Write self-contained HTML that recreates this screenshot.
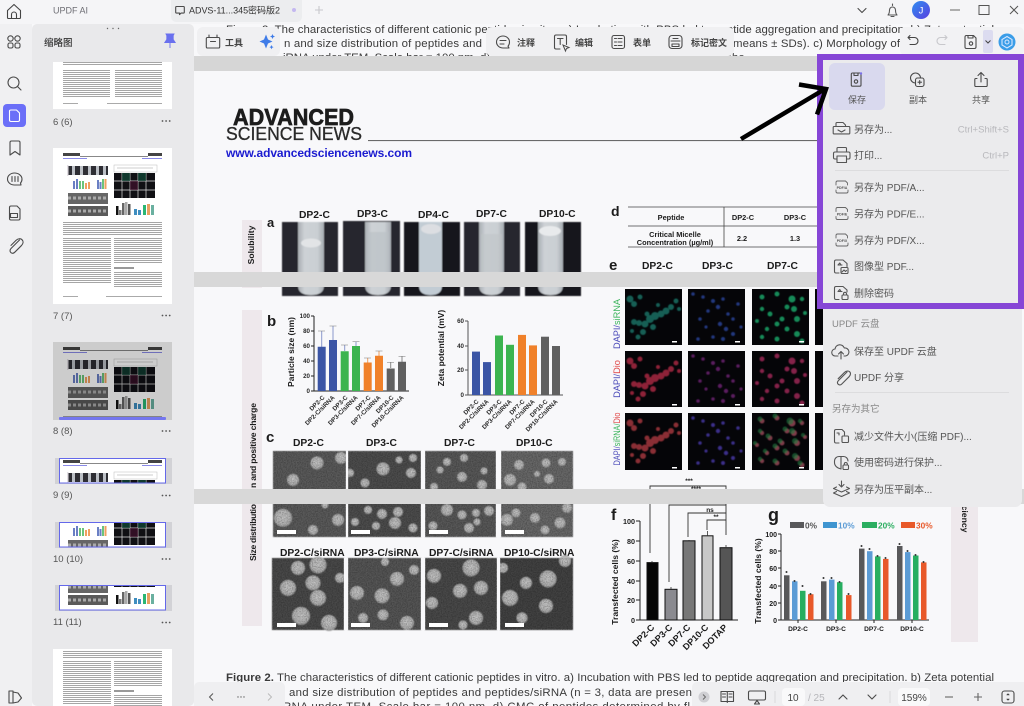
<!DOCTYPE html>
<html lang="zh">
<head>
<meta charset="utf-8">
<title>UPDF</title>
<style>
html,body{margin:0;padding:0;width:1024px;height:706px;overflow:hidden;background:#f8f8fa}
svg{display:block}
text{font-family:"Liberation Sans","Noto Sans CJK SC",sans-serif}
.cap{font-size:11.4px;fill:#3a3a3a}
.b{font-weight:bold;fill:#1c1c1c}
.l{font-size:10.3px}
.s{font-size:6.2px;font-weight:bold;fill:#2a2a2a}
.m{font-size:10px;fill:#555}
.h{font-size:9.5px;fill:#888}
.sc{font-size:9.5px;fill:#b8b8bc}
.tb{font-size:9px;fill:#444;font-weight:500}
.th{font-size:9.5px;fill:#555}
.i{fill:none;stroke:#4a4a4a;stroke-width:1.1;stroke-linecap:round;stroke-linejoin:round}
.ax{stroke:#222;stroke-width:1;fill:none}
.br{stroke:#333;stroke-width:.9;fill:none}
.pd{font-size:3.6px;font-weight:bold;fill:#555;text-anchor:middle}
</style>
</head>
<body>
<svg xmlns="http://www.w3.org/2000/svg" width="1024" height="706" viewBox="0 0 1024 706">
<defs>
<pattern id="tl" width="4" height="2" patternUnits="userSpaceOnUse"><rect width="4" height="1" fill="#a6a6a6"/></pattern>
<linearGradient id="tube" x1="0" x2="1" y1="0" y2="0"><stop offset="0" stop-color="#a8adb2"/><stop offset=".25" stop-color="#cdd1d5"/><stop offset=".75" stop-color="#cacfd3"/><stop offset="1" stop-color="#a6abb1"/></linearGradient>
<radialGradient id="ball" cx=".5" cy=".45" r=".55"><stop offset="0" stop-color="#c6c6c6"/><stop offset=".8" stop-color="#b0b0b0"/><stop offset="1" stop-color="#8c8c8c"/></radialGradient>
<filter id="sft" x="-10%" y="-10%" width="120%" height="120%"><feGaussianBlur stdDeviation=".5"/></filter>
<filter id="glow" x="-10%" y="-10%" width="120%" height="120%"><feGaussianBlur stdDeviation=".6"/></filter>
<filter id="noise" x="0" y="0" width="100%" height="100%"><feTurbulence type="fractalNoise" baseFrequency=".8" numOctaves="2" seed="4"/><feColorMatrix values="0 0 0 0 0  0 0 0 0 0  0 0 0 0 0  1.6 0 0 0 -.55"/></filter>
<linearGradient id="av" x1="0" x2="1" y1="0" y2="1"><stop offset="0" stop-color="#2f8df0"/><stop offset="1" stop-color="#5a3fe0"/></linearGradient>
<g id="dots"><circle cx="0" cy="0" r=".9" fill="#555"/><circle cx="3.6" cy="0" r=".9" fill="#555"/><circle cx="7.2" cy="0" r=".9" fill="#555"/></g>
<g id="c1"><circle cx="5" cy="10" r="3.5"/><circle cx="9" cy="15" r="3"/><circle cx="15" cy="8" r="2.5"/><circle cx="25" cy="30" r="4"/><circle cx="30" cy="27" r="4"/><circle cx="36" cy="25" r="3.5"/><circle cx="41" cy="22" r="3.5"/><circle cx="46" cy="18" r="3"/><circle cx="20" cy="35" r="3.5"/><circle cx="14" cy="34" r="3"/><circle cx="9" cy="33" r="3"/><circle cx="28" cy="38" r="3"/><circle cx="18" cy="43" r="3"/><circle cx="13" cy="48" r="2.5"/><circle cx="51" cy="12" r="2.5"/><circle cx="54" cy="20" r="2"/><circle cx="22" cy="25" r="2.5"/><circle cx="33" cy="16" r="2"/><circle cx="7" cy="42" r="2"/></g>
<g id="c2"><circle cx="5" cy="5" r="1.800"/><circle cx="15" cy="8" r="1.800"/><circle cx="25" cy="12" r="2"/><circle cx="30" cy="18" r="2.200"/><circle cx="35" cy="10" r="1.800"/><circle cx="40" cy="25" r="1.800"/><circle cx="45" cy="30" r="1.800"/><circle cx="38" cy="40" r="2.200"/><circle cx="32" cy="35" r="2.200"/><circle cx="20" cy="22" r="1.800"/><circle cx="12" cy="30" r="1.800"/><circle cx="45" cy="45" r="2"/><circle cx="25" cy="48" r="1.800"/><circle cx="10" cy="50" r="1.800"/><circle cx="50" cy="15" r="1.800"/><circle cx="35" cy="50" r="2"/><circle cx="18" cy="38" r="1.600"/><circle cx="53" cy="38" r="1.600"/></g>
<g id="c3"><circle cx="10" cy="8" r="2.500"/><circle cx="25" cy="5" r="2.500"/><circle cx="40" cy="10" r="3.500"/><circle cx="42" cy="20" r="3"/><circle cx="35" cy="18" r="2.500"/><circle cx="45" cy="30" r="3"/><circle cx="30" cy="30" r="2.500"/><circle cx="25" cy="35" r="2.500"/><circle cx="18" cy="25" r="2.500"/><circle cx="10" cy="20" r="2.200"/><circle cx="35" cy="40" r="2.500"/><circle cx="45" cy="45" r="3"/><circle cx="10" cy="48" r="2.200"/><circle cx="25" cy="50" r="2.500"/><circle cx="50" cy="52" r="2.500"/><circle cx="15" cy="40" r="2.200"/><circle cx="50" cy="10" r="2.200"/><circle cx="53" cy="24" r="2"/><circle cx="5" cy="32" r="2"/></g>
<g id="fig">
 <rect x="15" y="18" width="40" height="9" fill="#2e2e34"/>
 <path d="M19 18h3v9h-3zM27 18h3v9h-3zM35 18h3v9h-3zM43 18h3v9h-3zM50 18h3v9h-3z" fill="#bcc0c6"/>
 <rect x="14" y="17" width="1.500" height="11" fill="#e3dfe4"/>
 <rect x="61" y="17" width="43" height="7" fill="none" stroke="#bbb" stroke-width=".5"/>
 <path d="M64 20h36" stroke="#bbb" stroke-width=".8"/>
 <g fill="#6a7fc4"><rect x="20" y="33" width="2" height="8"/><rect x="23" y="31" width="2" height="10"/><rect x="44" y="32" width="2" height="9"/><rect x="46.500" y="34" width="2" height="7"/></g>
 <g fill="#6cc47c"><rect x="26" y="33" width="2" height="8"/><rect x="29" y="33" width="2" height="8"/><rect x="49" y="31" width="2" height="10"/></g>
 <g fill="#f0a060"><rect x="32" y="35" width="2" height="6"/><rect x="35" y="34" width="2" height="7"/><rect x="51.500" y="31" width="2" height="10"/></g>
 <rect x="15" y="45" width="40" height="11" fill="#666"/>
 <rect x="15" y="58" width="40" height="10" fill="#5a5a5a"/>
 <path d="M15 50h40M15 63h40" stroke="#aaa" stroke-width="3" stroke-dasharray="3 2"/>
 <rect x="61" y="25" width="41" height="25" fill="#101014"/>
 <path d="M69 25v25M77 25v25M85 25v25M93 25v25M61 33h41M61 42h41" stroke="#ddd" stroke-width=".7"/>
 <rect x="69" y="25" width="8" height="8" fill="#114a38" opacity=".7"/>
 <rect x="77" y="33" width="8" height="9" fill="#4a1030" opacity=".6"/>
 <rect x="85" y="25" width="8" height="8" fill="#114a38" opacity=".7"/>
 <g fill="#333"><rect x="63" y="58" width="2.500" height="9" fill="#111"/><rect x="66" y="62" width="2.500" height="5" fill="#777"/><rect x="69" y="55" width="2.500" height="12" fill="#666"/><rect x="72" y="54" width="2.500" height="13" fill="#aaa"/><rect x="75" y="56" width="2.500" height="11" fill="#555"/></g>
 <g><rect x="81" y="61" width="3" height="6" fill="#3f8ec0"/><rect x="85" y="62" width="3" height="5" fill="#3f8ec0"/><rect x="90" y="57" width="3" height="10" fill="#2bb673"/><rect x="94" y="56" width="3" height="11" fill="#e8a060"/><rect x="98" y="57" width="3" height="10" fill="#6ab0a0"/></g>
</g>
<g id="pg">
 <rect width="119" height="156" fill="#fff"/>
 <rect x="10" y="5" width="17" height="3" fill="#444"/><rect x="95" y="5" width="14" height="3" fill="#444"/>
 <rect x="27" y="8" width="68" height="1" fill="#888"/>
 <rect x="10" y="10" width="24" height="1" fill="#8a8ae8"/><rect x="89" y="10" width="20" height="1" fill="#8a8ae8"/>
 <use href="#fig"/>
 <rect x="10" y="74" width="99" height="14" fill="url(#tl)"/>
 <rect x="10" y="90" width="48" height="46" fill="url(#tl)"/>
 <rect x="61" y="90" width="48" height="26" fill="url(#tl)"/>
 <rect x="61" y="119" width="20" height="2" fill="#999"/>
 <rect x="61" y="124" width="48" height="16" fill="url(#tl)"/>
 <rect x="10" y="148" width="15" height="1" fill="#aaa"/><rect x="53" y="148" width="56" height="1" fill="#aaa"/>
</g>
<g id="txtpg">
 <rect width="119" height="56" fill="#fff"/>
 <rect x="10" y="0" width="99" height="4" fill="url(#tl)"/>
 <rect x="10" y="8" width="47" height="28" fill="url(#tl)"/>
 <rect x="62" y="8" width="47" height="28" fill="url(#tl)"/>
 <rect x="10" y="41" width="15" height="1" fill="#aaa"/><rect x="54" y="41" width="55" height="1" fill="#aaa"/>
</g>
</defs>

<!-- page background -->
<rect width="1024" height="706" fill="#f8f8fa"/>

<!-- upper caption tail of previous page -->
<text class="cap" x="226" y="33" textLength="768">Figure 2.  The characteristics of different cationic peptides in vitro. a) Incubation with PBS led to peptide aggregation and precipitation. b) Zeta potential</text>
<text class="cap" x="284" y="47" textLength="198">n and size distribution of peptides and</text>
<text class="cap" x="733" y="47" textLength="167">means ± SDs). c) Morphology of</text>
<text class="cap" x="283" y="61">iRNA under TEM. Scale bar = 100 nm. d) CMC of peptides determined by fluorescent probe</text>

<!-- page header -->
<text x="233" y="125" style="font-size:23.500px;font-weight:bold;fill:#1c1c1c;stroke:#1c1c1c;stroke-width:.7" textLength="121" lengthAdjust="spacingAndGlyphs">ADVANCED</text>
<text x="226" y="140" style="font-size:18px;fill:#2a2a2a;stroke:#2a2a2a;stroke-width:.3" textLength="136" lengthAdjust="spacingAndGlyphs">SCIENCE NEWS</text>
<rect x="368" y="140" width="455" height="1.100" fill="#6a6a6a"/>
<text x="226" y="157" style="font-size:12px;font-weight:bold;fill:#1b1bd0" textLength="186">www.advancedsciencenews.com</text>

<!-- side strips -->
<rect x="242" y="220" width="20" height="68" fill="#eee8ec"/>
<rect x="242" y="310" width="20" height="316" fill="#eee8ec"/>
<rect x="951" y="505" width="27" height="137" fill="#eee8ec"/>
<text class="b" style="font-size:8.600px" transform="translate(254,245) rotate(-90)" text-anchor="middle">Solubility</text>
<text class="b" style="font-size:8.600px" transform="translate(256,561) rotate(-90)" textLength="57">Size distributio</text>
<text class="b" style="font-size:8.600px" transform="translate(256,488) rotate(-90)" textLength="85">n and positive charge</text>
<text class="b" style="font-size:8.600px" transform="translate(962,519) rotate(90)" text-anchor="middle">ciency</text>

<!-- a -->
<text class="b" x="267" y="227" style="font-size:13px">a</text>
<text class="b l" x="299" y="218">DP2-C</text>
<text class="b l" x="357" y="217">DP3-C</text>
<text class="b l" x="418" y="218">DP4-C</text>
<text class="b l" x="476" y="217">DP7-C</text>
<text class="b l" x="539" y="217">DP10-C</text>
<g filter="url(#sft)">
 <rect x="282" y="222" width="56" height="74" fill="#26262d"/>
 <rect x="343" y="221" width="57" height="75" fill="#26262d"/>
 <rect x="404" y="222" width="56" height="74" fill="#16161d"/>
 <rect x="464" y="222" width="56" height="74" fill="#26262d"/>
 <rect x="525" y="222" width="56" height="74" fill="#16161d"/>
 <path d="M298 222h26v64q0 9-13 9t-13-9z" fill="url(#tube)"/>
 <path d="M365 222h26v64q0 9-13 9t-13-9z" fill="url(#tube)"/>
 <path d="M419 222h23v64q0 9-11.500 9t-11.500-9z" fill="#c2ccd4"/>
 <path d="M479 222h25v64q0 9-12.500 9t-12.500-9z" fill="url(#tube)"/>
 <path d="M538 222h25v64q0 9-12.500 9t-12.500-9z" fill="url(#tube)"/>
 <ellipse cx="311" cy="243" rx="10" ry="4.500" fill="#e2e4e6"/>
 <ellipse cx="431" cy="229" rx="10" ry="5" fill="#dcdee2"/>
 <ellipse cx="550" cy="231" rx="11" ry="5" fill="#e8eaec"/>
 <rect x="367" y="232" width="22" height="40" fill="#b9bfc4" opacity=".6"/>
 <rect x="481" y="234" width="21" height="38" fill="#c0c4c8" opacity=".6"/>
</g>

<!-- b charts -->
<text class="b" x="267" y="326" style="font-size:15px">b</text>
<text class="b" style="font-size:8.500px" transform="translate(294,352) rotate(-90)" text-anchor="middle">Particle size (nm)</text>
<text class="b" style="font-size:8.500px" transform="translate(444,348) rotate(-90)" text-anchor="middle">Zeta potential (mV)</text>
<g>
 <path class="ax" d="M314 316v75h95M311 316h3M311 331h3M311 346h3M311 361h3M311 376h3M311 391h3"/>
 <g text-anchor="end" class="s"><text x="310" y="318">100</text><text x="310" y="333">80</text><text x="310" y="348">60</text><text x="310" y="363">40</text><text x="310" y="378">20</text><text x="310" y="393">0</text></g>
 <path d="M321.700 347V331M333 340V326M344.700 351V345M356 346V342" stroke="#8a98cc" stroke-width="1" fill="none"/>
 <path d="M367.700 363V358M379 356V351" stroke="#f0a060" stroke-width="1"/>
 <path d="M390.700 368V362M402 362V356" stroke="#888" stroke-width="1"/>
 <path d="M318 331h7M329.500 326h7M341 345h7M352.500 341.500h7M364 358h7M375.500 351h7M387 362.500h7M398.500 356.500h7" stroke="#777" stroke-width=".6"/>
 <rect x="317.700" y="346.750" width="8" height="44.250" fill="#3b55a5"/>
 <rect x="329" y="340" width="8" height="51" fill="#3b55a5"/>
 <rect x="340.700" y="351.250" width="8" height="39.750" fill="#3cb44f"/>
 <rect x="352" y="346" width="8" height="45" fill="#3cb44f"/>
 <rect x="363.700" y="362.500" width="8" height="28.500" fill="#f0812a"/>
 <rect x="375" y="355.750" width="8" height="35.250" fill="#f0812a"/>
 <rect x="386.700" y="368.500" width="8" height="22.500" fill="#606060"/>
 <rect x="398" y="361.750" width="8" height="29.250" fill="#606060"/>
</g>
<g class="s" text-anchor="end">
 <text transform="translate(325,398) rotate(-45)">DP2-C</text>
 <text transform="translate(335,398) rotate(-45)">DP2-C/siRNA</text>
 <text transform="translate(348,398) rotate(-45)">DP3-C</text>
 <text transform="translate(358,398) rotate(-45)">DP3-C/siRNA</text>
 <text transform="translate(371,398) rotate(-45)">DP7-C</text>
 <text transform="translate(381,398) rotate(-45)">DP7-C/siRNA</text>
 <text transform="translate(394,398) rotate(-45)">DP10-C</text>
 <text transform="translate(404,398) rotate(-45)">DP10-C/siRNA</text>
</g>
<g>
 <path class="ax" d="M468 321v74h95M465 321h3M465 346h3M465 370h3M465 395h3" style="stroke:#555"/>
 <g text-anchor="end" class="s"><text x="464" y="323">60</text><text x="464" y="348">40</text><text x="464" y="372">20</text><text x="464" y="397">0</text></g>
 <rect x="472" y="351.600" width="8" height="43.400" fill="#3b55a5"/>
 <rect x="483" y="362.100" width="8" height="32.900" fill="#3b55a5"/>
 <rect x="495" y="335.500" width="8" height="59.500" fill="#3cb44f"/>
 <rect x="506" y="344.800" width="8" height="50.200" fill="#3cb44f"/>
 <rect x="518" y="334.900" width="8" height="60.100" fill="#f0812a"/>
 <rect x="529" y="345.400" width="8" height="49.600" fill="#f0812a"/>
 <rect x="541" y="336.700" width="8" height="58.300" fill="#606060"/>
 <rect x="552" y="346" width="8" height="49" fill="#606060"/>
</g>
<g class="s" text-anchor="end">
 <text transform="translate(479,402) rotate(-45)">DP2-C</text>
 <text transform="translate(489,402) rotate(-45)">DP2-C/siRNA</text>
 <text transform="translate(502,402) rotate(-45)">DP3-C</text>
 <text transform="translate(512,402) rotate(-45)">DP3-C/siRNA</text>
 <text transform="translate(525,402) rotate(-45)">DP7-C</text>
 <text transform="translate(535,402) rotate(-45)">DP7-C/siRNA</text>
 <text transform="translate(548,402) rotate(-45)">DP10-C</text>
 <text transform="translate(558,402) rotate(-45)">DP10-C/siRNA</text>
</g>

<!-- c SEM -->
<text class="b" x="266" y="442" style="font-size:15px">c</text>
<text class="b l" x="293" y="446">DP2-C</text>
<text class="b l" x="366" y="446">DP3-C</text>
<text class="b l" x="444" y="446">DP7-C</text>
<text class="b l" x="516" y="446">DP10-C</text>
<text class="b l" x="280" y="556">DP2-C/siRNA</text>
<text class="b l" x="354" y="556">DP3-C/siRNA</text>
<text class="b l" x="429" y="556">DP7-C/siRNA</text>
<text class="b l" x="504" y="556">DP10-C/siRNA</text>
<g filter="url(#sft)">
 <rect x="273" y="451" width="73" height="86" fill="#5a5a5a"/>
 <rect x="348" y="451" width="73" height="86" fill="#4e4e4e"/>
 <rect x="425" y="451" width="71" height="86" fill="#595959"/>
 <rect x="501" y="451" width="72" height="86" fill="#686868"/>
 <rect x="272" y="558" width="72" height="72" fill="#484848"/>
 <rect x="348" y="558" width="73" height="72" fill="#545454"/>
 <rect x="425" y="558" width="72" height="72" fill="#4a4a4a"/>
 <rect x="500" y="558" width="73" height="72" fill="#424242"/>
 <g fill="url(#ball)">
  <circle cx="317" cy="463" r="6.500"/><circle cx="293" cy="480" r="6"/><circle cx="341" cy="458" r="6"/><circle cx="283" cy="518" r="9"/><circle cx="338" cy="520" r="6"/><circle cx="313" cy="530" r="5"/><circle cx="325" cy="505" r="3.500"/>
  <circle cx="383" cy="469" r="6.500"/><circle cx="411" cy="473" r="5"/><circle cx="365" cy="483" r="4.500"/><circle cx="399" cy="460" r="3.500"/><circle cx="413" cy="458" r="4"/><circle cx="368" cy="510" r="4"/><circle cx="382" cy="514" r="5"/><circle cx="398" cy="512" r="5"/><circle cx="395" cy="523" r="6"/><circle cx="413" cy="528" r="4.500"/><circle cx="376" cy="526" r="4"/><circle cx="355" cy="522" r="4"/><circle cx="350" cy="473" r="4"/>
  <circle cx="447" cy="462" r="4"/><circle cx="462" cy="477" r="5"/><circle cx="484" cy="471" r="3.500"/><circle cx="440" cy="470" r="3.500"/><circle cx="482" cy="485" r="5"/><circle cx="464" cy="458" r="4"/><circle cx="447" cy="510" r="6"/><circle cx="462" cy="515" r="4.500"/><circle cx="476" cy="513" r="4"/><circle cx="489" cy="511" r="5"/><circle cx="469" cy="528" r="5"/><circle cx="433" cy="526" r="4.500"/><circle cx="477" cy="522" r="3.500"/><circle cx="434" cy="487" r="4"/>
  <circle cx="519" cy="465" r="5"/><circle cx="546" cy="463" r="4.500"/><circle cx="562" cy="462" r="4"/><circle cx="537" cy="474" r="3"/><circle cx="549" cy="479" r="5"/><circle cx="510" cy="480" r="6"/><circle cx="522" cy="487" r="4.500"/><circle cx="516" cy="513" r="4.500"/><circle cx="535" cy="518" r="5"/><circle cx="560" cy="523" r="5.500"/><circle cx="545" cy="530" r="4.500"/><circle cx="507" cy="520" r="6"/><circle cx="567" cy="508" r="5"/>
  <circle cx="298" cy="568" r="7"/><circle cx="318" cy="565" r="8.500"/><circle cx="288" cy="588" r="8"/><circle cx="313" cy="583" r="7.500"/><circle cx="318" cy="598" r="8"/><circle cx="301" cy="616" r="9"/><circle cx="329" cy="623" r="8"/><circle cx="340" cy="578" r="5"/>
  <circle cx="397" cy="579" r="7"/><circle cx="357" cy="593" r="7"/><circle cx="382" cy="596" r="7.500"/><circle cx="383" cy="615" r="5.500"/><circle cx="407" cy="623" r="7"/><circle cx="363" cy="618" r="5"/><circle cx="414" cy="570" r="5"/><circle cx="385" cy="562" r="4"/>
  <circle cx="471" cy="568" r="8.500"/><circle cx="434" cy="576" r="7"/><circle cx="460" cy="591" r="7"/><circle cx="481" cy="588" r="7"/><circle cx="476" cy="618" r="7"/><circle cx="432" cy="603" r="6"/><circle cx="463" cy="625" r="4.500"/>
  <circle cx="548" cy="579" r="8.500"/><circle cx="510" cy="598" r="8"/><circle cx="546" cy="606" r="7"/><circle cx="526" cy="583" r="6"/><circle cx="522" cy="618" r="5.500"/><circle cx="503" cy="568" r="5"/><circle cx="565" cy="561" r="6"/>
 </g>
</g>
<rect x="273" y="451" width="300" height="86" filter="url(#noise)" opacity=".35"/>
<rect x="272" y="558" width="301" height="72" filter="url(#noise)" opacity=".35"/>
<g fill="#f8f8fa">
 <rect x="346" y="451" width="2" height="86"/><rect x="421" y="451" width="4" height="86"/><rect x="496" y="451" width="5" height="86"/>
 <rect x="344" y="558" width="4" height="72"/><rect x="421" y="558" width="4" height="72"/><rect x="497" y="558" width="3" height="72"/>
</g>
<g fill="#fff">
 <rect x="277" y="530" width="19" height="4"/><rect x="351" y="530" width="19" height="4"/><rect x="429" y="530" width="19" height="4"/><rect x="505" y="530" width="19" height="4"/>
 <rect x="277" y="623" width="19" height="4"/><rect x="351" y="623" width="19" height="4"/><rect x="429" y="623" width="19" height="4"/><rect x="505" y="623" width="19" height="4"/>
</g>

<!-- d -->
<text class="b" x="611" y="216" style="font-size:14px">d</text>
<path d="M628 207H823M628 226H823M628 247H823M724 207v40" stroke="#444" stroke-width=".8" fill="none"/>
<g class="b" style="font-size:7.400px" text-anchor="middle">
 <text x="671" y="220">Peptide</text><text x="743" y="220">DP2-C</text><text x="795" y="220">DP3-C</text>
 <text x="675" y="237">Critical Micelle</text><text x="675" y="245">Concentration (µg/ml)</text>
 <text x="742" y="241">2.2</text><text x="795" y="241">1.3</text>
</g>

<!-- e -->
<text class="b" x="609" y="270" style="font-size:15px">e</text>
<text class="b l" x="642" y="269">DP2-C</text>
<text class="b l" x="702" y="269">DP3-C</text>
<text class="b l" x="767" y="269">DP7-C</text>
<g>
 <rect x="625" y="289" width="57" height="56" fill="#050508"/><rect x="688" y="289" width="57" height="56" fill="#050508"/><rect x="752" y="289" width="57" height="56" fill="#050508"/><rect x="815" y="289" width="8" height="56" fill="#050508"/>
 <rect x="625" y="351" width="57" height="56" fill="#050508"/><rect x="688" y="351" width="57" height="56" fill="#050508"/><rect x="752" y="351" width="57" height="56" fill="#050508"/><rect x="815" y="351" width="8" height="56" fill="#050508"/>
 <rect x="625" y="413" width="57" height="57" fill="#050508"/><rect x="688" y="413" width="57" height="57" fill="#050508"/><rect x="752" y="413" width="57" height="57" fill="#050508"/><rect x="815" y="413" width="8" height="57" fill="#050508"/>
 <g filter="url(#glow)">
  <use href="#c1" x="625" y="289" fill="#125f54"/>
  <use href="#c2" x="688" y="289" fill="#22387e"/>
  <use href="#c3" x="752" y="289" fill="#138a58"/>
  <use href="#c1" x="625" y="351" fill="#8e2238"/>
  <use href="#c2" x="688" y="351" fill="#5a1f5e"/>
  <use href="#c3" x="752" y="351" fill="#842048"/>
  <use href="#c1" x="625" y="413" fill="#8a2f34"/>
  <use href="#c2" x="688" y="413" fill="#3a2e88"/>
  <use href="#c3" x="752" y="413" fill="#7e3a48"/>
  <use href="#c3" x="750" y="411" fill="#207a40" opacity=".6"/>
 </g>
 <g fill="#fff">
  <rect x="672" y="341" width="5" height="1.500"/><rect x="735" y="341" width="5" height="1.500"/><rect x="799" y="341" width="5" height="1.500"/>
  <rect x="672" y="404" width="5" height="1.500"/><rect x="735" y="404" width="5" height="1.500"/><rect x="799" y="404" width="5" height="1.500"/>
  <rect x="672" y="467" width="5" height="1.500"/><rect x="735" y="467" width="5" height="1.500"/><rect x="799" y="467" width="5" height="1.500"/>
 </g>
</g>
<g style="font-size:9.200px">
 <text transform="translate(620,324) rotate(-90)" text-anchor="middle"><tspan fill="#4848b8">DAPI/</tspan><tspan fill="#3cb45c">siRNA</tspan></text>
 <text transform="translate(620,379) rotate(-90)" text-anchor="middle"><tspan fill="#4848b8">DAPI/</tspan><tspan fill="#e04848">Dio</tspan></text>
 <text transform="translate(620,439) rotate(-90)" text-anchor="middle" textLength="53" lengthAdjust="spacingAndGlyphs"><tspan fill="#4848b8">DAPI/</tspan><tspan fill="#3cb45c">siRNA/</tspan><tspan fill="#e04848">Dio</tspan></text>
</g>

<!-- f -->
<text class="b" x="611" y="520" style="font-size:16px">f</text>
<text class="b" style="font-size:8.600px" transform="translate(618,582) rotate(-90)" text-anchor="middle">Transfected cells (%)</text>
<path class="ax" d="M640 521v99h98M636 521h4M636 541h4M636 561h4M636 581h4M636 600h4M636 620h4" style="stroke-width:1"/>
<g class="b" style="font-size:7.200px" text-anchor="end"><text x="635" y="524">100</text><text x="635" y="544">80</text><text x="635" y="564">60</text><text x="635" y="584">40</text><text x="635" y="603">20</text><text x="635" y="623">0</text></g>
<g stroke="#111" stroke-width="1">
 <rect x="647" y="562.600" width="11" height="57.400" fill="#050505"/>
 <rect x="665" y="589.300" width="12" height="30.700" fill="#8a8a90"/>
 <rect x="683" y="540.800" width="12" height="79.200" fill="#777"/>
 <rect x="702" y="535.800" width="11" height="84.200" fill="#c8c8c8"/>
 <rect x="720" y="547.700" width="12" height="72.300" fill="#555"/>
</g>
<path d="M652 562v-1M671 589v-2M689 541v-1M707.500 536v-5M726 548v-3" stroke="#333" stroke-width=".8"/>
<path class="br" d="M650 553V486H726V535M669 582V505H726M688 537V513H726M707 530V520H726"/>
<g class="b" style="font-size:6.500px" text-anchor="middle"><text x="689" y="483">***</text><text x="696" y="491">****</text><text x="710" y="512">ns</text><text x="716" y="519">**</text></g>
<g class="b" style="font-size:9px" text-anchor="end">
 <text transform="translate(655,628) rotate(-45)">DP2-C</text>
 <text transform="translate(673,628) rotate(-45)">DP3-C</text>
 <text transform="translate(691,628) rotate(-45)">DP7-C</text>
 <text transform="translate(709,628) rotate(-45)">DP10-C</text>
 <text transform="translate(728,628) rotate(-45)">DOTAP</text>
</g>

<!-- g -->
<text class="b" x="768" y="521" style="font-size:18px">g</text>
<g class="b" style="font-size:8.300px">
 <rect x="790" y="522" width="14" height="6" fill="#58585a"/><text x="805" y="528.500" fill="#555">0%</text>
 <rect x="823" y="522" width="14" height="6" fill="#3f95d0"/><text x="838" y="528.500" style="fill:#5b9bd5">10%</text>
 <rect x="862" y="522" width="15" height="6" fill="#2bae60"/><text x="878" y="528.500" style="fill:#2bae60">20%</text>
 <rect x="901" y="522" width="14" height="6" fill="#e8592a"/><text x="916" y="528.500" style="fill:#e8592a">30%</text>
</g>
<text class="b" style="font-size:8.600px" transform="translate(761,581) rotate(-90)" text-anchor="middle">Transfected cells (%)</text>
<path class="ax" d="M781 534v86h148M778 534h3M778 551h3M778 568h3M778 586h3M778 603h3M778 620h3M798 620v3M836 620v3M874 620v3M912 620v3"/>
<g class="b" style="font-size:7px" text-anchor="end"><text x="777" y="537">100</text><text x="777" y="554">80</text><text x="777" y="571">60</text><text x="777" y="589">40</text><text x="777" y="606">20</text><text x="777" y="623">0</text></g>
<g fill="#58585a"><rect x="784" y="575.300" width="5.500" height="44.700"/><rect x="821" y="581.300" width="5.500" height="38.700"/><rect x="859" y="548.600" width="5.500" height="71.400"/><rect x="897" y="546" width="5.500" height="74"/></g>
<g fill="#5b9bd5"><rect x="792" y="581.300" width="5.500" height="38.700"/><rect x="829" y="579.600" width="5.500" height="40.400"/><rect x="867" y="551.200" width="5.500" height="68.800"/><rect x="905" y="552.100" width="5.500" height="67.900"/></g>
<g fill="#27ae60"><rect x="800" y="590.800" width="5.500" height="29.200"/><rect x="837" y="582.200" width="5.500" height="37.800"/><rect x="875" y="556.400" width="5.500" height="63.600"/><rect x="913" y="555.500" width="5.500" height="64.500"/></g>
<g fill="#e8592a"><rect x="808" y="594.200" width="5.500" height="25.800"/><rect x="846" y="595.100" width="5.500" height="24.900"/><rect x="883" y="558.900" width="5.500" height="61.100"/><rect x="921" y="562.400" width="5.500" height="57.600"/></g>
<g fill="#333">
 <circle cx="786.500" cy="572" r="1"/><circle cx="794.500" cy="581" r="1"/><circle cx="802.500" cy="586" r="1"/><circle cx="810.500" cy="594" r="1"/>
 <circle cx="823.500" cy="578" r="1"/><circle cx="831.500" cy="578" r="1"/><circle cx="839.500" cy="582" r="1"/><circle cx="848.500" cy="594" r="1"/>
 <circle cx="861.500" cy="546" r="1"/><circle cx="869.500" cy="549" r="1"/><circle cx="877.500" cy="556" r="1"/><circle cx="885.500" cy="558" r="1"/>
 <circle cx="899.500" cy="544" r="1"/><circle cx="907.500" cy="551" r="1"/><circle cx="915.500" cy="555" r="1"/><circle cx="923.500" cy="562" r="1"/>
</g>
<g class="b" style="font-size:6.600px" text-anchor="middle"><text x="798" y="631">DP2-C</text><text x="836" y="631">DP3-C</text><text x="874" y="631">DP7-C</text><text x="912" y="631">DP10-C</text></g>

<!-- bottom caption -->
<text class="cap" x="226" y="681" textLength="768"><tspan font-weight="bold">Figure 2.</tspan>  The characteristics of different cationic peptides in vitro. a) Incubation with PBS led to peptide aggregation and precipitation. b) Zeta potential</text>
<text class="cap" x="289" y="696" textLength="403">and size distribution of peptides and peptides/siRNA (n = 3, data are presen</text>
<text class="cap" x="283" y="710" textLength="407">RNA under TEM. Scale bar = 100 nm. d) CMC of peptides determined by fl</text>

<!-- page gap bands -->
<rect x="194" y="56" width="830" height="15" fill="#d6d6d6"/>
<rect x="194" y="272" width="830" height="15" fill="#d8d8d8"/>
<rect x="194" y="489" width="830" height="15" fill="#d8d8d8"/>

<!-- left rail and panel -->
<rect x="0" y="24" width="32" height="682" fill="#f0f0f2"/>
<rect x="32" y="24" width="162" height="682" rx="5" fill="#e9e9eb"/>
<circle cx="107.500" cy="28.500" r=".7" fill="#666"/><circle cx="113" cy="28.500" r=".7" fill="#666"/><circle cx="118.500" cy="28.500" r=".7" fill="#666"/>
<text x="44" y="46" style="font-size:9.500px;fill:#333;font-weight:500">缩略图</text>
<path d="M166 34h8l-.8 1.500v4l2 3h-10.400l2-3v-4zM170 42.500V48" fill="#6a70ee" stroke="#6a70ee" stroke-width=".9"/>

<!-- rail icons -->
<g class="i">
 <circle cx="10.500" cy="38.500" r="2.700"/><circle cx="17.500" cy="38.500" r="2.700"/><rect x="8" y="43" width="5" height="5" rx="1.600"/><rect x="15" y="43" width="5" height="5" rx="1.600"/>
 <circle cx="13.500" cy="82.500" r="5.500"/><path d="M17.500 86.500l3.500 3.500"/>
 <path d="M10 142.500q0-1.500 1.500-1.500h7q1.500 0 1.500 1.500v12.500l-5-3.500-5 3.500z"/>
 <path d="M14.500 173c-4 0-7 2.700-7 6s3 6 7 6h6.500l-.5-2c1-1 1.500-2.500 1.500-4 0-3.300-3.500-6-7.500-6zM12 176.500v5M15 176.500v5M18 176.500v5"/>
 <path d="M11 206h6l3 3v9.500q0 1.500-1.500 1.500h-7.500q-1.500 0-1.500-1.500v-11q0-1.500 1.500-1.500zM10.500 213.500h7v4h-7z"/>
 <path d="M19.500 240l-8.500 8.500c-1.600 1.600-1 3.500 0 4.200s2.500.8 3.800-.5l6.500-6.500c2.500-2.500 2-4.700.7-6s-3.800-1.500-6 .7l-5 5"/>
 <path d="M9 691h4v12h-4zM13 692l5 1 3.500 5-3.500 4-5 1" />
</g>
<rect x="3" y="104" width="23" height="23" rx="4" fill="#6b6ff8"/>
<path d="M11 110h5.500l3 3v7q0 1.500-1.500 1.500h-7q-1.500 0-1.500-1.500v-9q0-1 1.500-1z" fill="none" stroke="#fff" stroke-width="1.100"/>

<!-- thumbnails -->
<svg x="53" y="62" width="119" height="47" viewBox="0 0 119 47"><use href="#txtpg"/></svg>
<text class="th" x="53" y="125">6 (6)</text><use href="#dots" x="162.500" y="121"/>
<svg x="53" y="148" width="119" height="156" viewBox="0 0 119 156"><use href="#pg"/></svg>
<text class="th" x="53" y="319">7 (7)</text><use href="#dots" x="162.500" y="315.500"/>
<svg x="53" y="342" width="119" height="78" viewBox="0 0 119 78"><use href="#pg"/><rect width="119" height="78" fill="#000" opacity=".2"/></svg>
<rect x="59" y="417" width="107" height="3" rx="1" fill="#7476ee"/>
<text class="th" x="53" y="434">8 (8)</text><use href="#dots" x="162.500" y="431"/>
<rect x="55" y="458" width="117" height="26" fill="#d2d2d6"/>
<svg x="59" y="458" width="107" height="25" viewBox="6 3 107 25"><use href="#pg"/></svg>
<rect x="59.500" y="458.500" width="106" height="24.500" fill="none" stroke="#6468ea" stroke-width="1"/>
<text class="th" x="53" y="498">9 (9)</text><use href="#dots" x="162.500" y="495.500"/>
<rect x="55" y="522" width="117" height="26" fill="#d2d2d6"/>
<svg x="59" y="522" width="107" height="25" viewBox="6 27 107 25"><use href="#pg"/></svg>
<rect x="59.500" y="522.500" width="106" height="24.500" fill="none" stroke="#6468ea" stroke-width="1"/>
<text class="th" x="53" y="562">10 (10)</text><use href="#dots" x="162.500" y="559"/>
<rect x="55" y="585" width="117" height="26" fill="#d2d2d6"/>
<svg x="59" y="585" width="107" height="25" viewBox="6 48 107 25"><use href="#pg"/></svg>
<rect x="59.500" y="585.500" width="106" height="24.500" fill="none" stroke="#6468ea" stroke-width="1"/>
<text class="th" x="53" y="625">11 (11)</text><use href="#dots" x="162.500" y="622.500"/>
<svg x="53" y="649" width="119" height="57" viewBox="0 0 119 57"><rect width="119" height="57" fill="#fff"/><rect x="10" y="1" width="99" height="8" fill="url(#tl)"/><rect x="10" y="12" width="48" height="44" fill="url(#tl)"/><rect x="61" y="12" width="48" height="26" fill="url(#tl)"/><rect x="61" y="41" width="20" height="2" fill="#999"/><rect x="61" y="46" width="48" height="11" fill="url(#tl)"/></svg>

<!-- title bar -->
<rect width="1024" height="24" fill="#f5f5f7"/>
<path class="i" d="M7.500 10.500L14 4.500l6.500 6v7q0 1-1 1h-11q-1 0-1-1zM11.500 18.500v-4a2.500 2.500 0 0 1 5 0v4" style="stroke:#444"/>
<text x="53" y="13.500" style="font-size:9px;fill:#6f6f75">UPDF AI</text>
<path d="M171 0h131v16q0 6-6 6H177q-6 0-6-6z" fill="#ecedef"/>
<path class="i" d="M176.500 6.500h7q.8 0 .8.800v5q0 .8-.8.800h-2.500l-1.500 1.500v-1.500h-3q-.8 0-.8-.800v-5q0-.8.800-.800z"/>
<text x="189" y="13.500" style="font-size:9px;fill:#333" textLength="91">ADVS-11...345密码版2</text>
<circle cx="294" cy="10" r="2" fill="#c4b8f0"/>
<path d="M319 6v8M315 10h8" stroke="#c8c8cc" stroke-width="1.100"/>
<path class="i" d="M858 8.500l4 4 4-4"/>
<path class="i" d="M888 15c1-1 1.500-2 1.500-5a3 3 0 0 1 6 0c0 3 .5 4 1.500 5zM891 16.500h3M892.500 4v1.500" style="stroke:#555"/>
<circle cx="921" cy="10" r="9" fill="url(#av)"/><text x="921" y="13.500" text-anchor="middle" style="font-size:9.500px;fill:#fff">J</text>
<path d="M950 10h10" stroke="#666" stroke-width="1"/>
<rect x="979" y="5.500" width="10" height="9" fill="none" stroke="#555" stroke-width="1"/>
<path d="M1010 6l8 8M1018 6l-8 8" stroke="#555" stroke-width="1"/>

<!-- tools toolbar -->
<rect x="197" y="27" width="83" height="29" rx="6" fill="#f0f0f2"/>
<path class="i" d="M207.500 37.500h11q1.200 0 1.200 1.200v8q0 1.300-1.200 1.300h-11q-1.200 0-1.200-1.300v-8q0-1.200 1.200-1.200zM209 37.500v-2.500M217 37.500v-2.500M210.500 41.500h5"/>
<text class="tb" x="225" y="46" style="font-weight:bold">工具</text>
<path d="M266 34.500l2 5 4.500 2-4.500 2-2 5-2-5-4.500-2 4.500-2zM272.500 34l.8 1.800 1.700.7-1.700.7-.8 1.800-.8-1.800-1.700-.7 1.700-.7zM271.500 45l.7 1.500 1.400.6-1.400.6-.7 1.500-.7-1.500-1.400-.6 1.400-.6z" fill="#3f7ce8"/>

<rect x="486" y="27" width="248" height="29" rx="6" fill="#f0f0f2"/>
<path class="i" d="M503 36c-3.500 0-6.500 2.600-6.500 6s3 6 6.500 6h6l-1-1.800c.9-1 1.500-2.500 1.500-4.200 0-3.400-3-6-6.500-6zM500 40.500h6M500 44h4"/>
<text class="tb" x="517" y="46" style="font-weight:bold">注释</text>
<path class="i" d="M556 35h9q1.500 0 1.500 1.500v8M556 35q-1.500 0-1.500 1.500v11q0 1.500 1.500 1.500h4M557.500 38.500h5.500M560.200 38.500v6"/>
<path d="M563 45l2.500 6 1-2.500 2.500-1z" fill="none" stroke="#4a4a4a" stroke-width="1"/>
<text class="tb" x="575" y="46" style="font-weight:bold">编辑</text>
<rect class="i" x="612" y="35.500" width="12.500" height="13" rx="2"/><path class="i" d="M614.500 38.500h2M618 38.500h4M614.500 42h2M618 42h4M614.500 45.500h2M618 45.500h4"/>
<text class="tb" x="633" y="46" style="font-weight:bold">表单</text>
<rect class="i" x="669" y="35.500" width="13" height="13" rx="3"/><path class="i" d="M671 41h9M673 38.500h5M672 44h7v2.500h-7z"/>
<text class="tb" x="691" y="46" style="font-weight:bold">标记密文</text>

<!-- right toolbar -->
<rect x="900" y="27" width="124" height="28" rx="5" fill="#f2f2f4"/>
<path class="i" d="M910 39.500l-2-2 2-2M908 37.500h6.500a3.500 3.500 0 0 1 0 7H910" style="stroke:#444"/>
<path class="i" d="M945 39.500l2-2-2-2M947 37.500h-6.500a3.500 3.500 0 0 0 0 7H945" style="stroke:#c8c8cc"/>
<path class="i" d="M966.500 35.500h7l2.500 2.500v9q0 1.500-1.500 1.500h-8q-1.500 0-1.500-1.500v-10q0-1.500 1.500-1.500zM968 35.500v2.500h5v-2.500"/><circle class="i" cx="971" cy="43.500" r="1.700"/>
<rect x="983" y="30" width="10" height="23" rx="2" fill="#dcdcf0"/>
<path d="M985.500 40.500l2.500 2.500 2.500-2.500" fill="none" stroke="#444" stroke-width="1"/>
<circle cx="1007" cy="42" r="8.500" fill="#3a9de8"/>
<path d="M1007 36.500l5 3v5.500l-5 3-5-3v-5.500z" fill="none" stroke="#d8e8ff" stroke-width="1.100"/><circle cx="1007" cy="42" r="2" fill="none" stroke="#d8e8ff" stroke-width="1"/>

<!-- bottom-left toolbar -->
<path d="M194 706V688q0-6 6-6h79q6 0 6 6v18z" fill="#efeff1"/>
<path d="M213 693.500l-3.500 3.500 3.500 3.500" fill="none" stroke="#555" stroke-width="1"/>
<circle cx="238" cy="697" r=".7" fill="#666"/><circle cx="241" cy="697" r=".7" fill="#666"/><circle cx="244" cy="697" r=".7" fill="#666"/>
<path d="M268 693.500l3.500 3.500-3.500 3.500" fill="none" stroke="#bbb" stroke-width="1"/>

<!-- bottom-right toolbar -->
<path d="M692 706V688q0-6 6-6h326v24z" fill="#efeff1"/>
<circle cx="704" cy="697" r="5.500" fill="#cfcfd3"/><path d="M703 694.500l2.500 2.500-2.500 2.500" fill="none" stroke="#666" stroke-width=".9"/>
<path class="i" d="M721 691.500h5.500q.8 0 .8 1v10c0-1-.4-1-.8-1H721zM733.500 691.500H728q-.8 0-.8 1M733.500 691.500v10H728M722.500 694h3M722.500 697h3M729 694h3M729 697h3"/>
<path class="i" d="M750 691h14q1.500 0 1.500 1.500v6q0 1.500-1.500 1.500h-14q-1.500 0-1.500-1.500v-6q0-1.500 1.500-1.500zM757 700.500l-2.500 3.500h5z"/>
<path d="M775 691v12" stroke="#d8d8da" stroke-width="1"/>
<rect x="782" y="688" width="23" height="18" rx="4" fill="#f9f9fa"/>
<text x="793" y="701" text-anchor="middle" style="font-size:10px;fill:#444">10</text>
<text x="808" y="701" style="font-size:10px;fill:#b6b6ba">/ 25</text>
<path class="i" d="M839 699l4-4 4 4"/><path class="i" d="M868 695l4 4 4-4"/>
<path d="M890 691v12" stroke="#d8d8da" stroke-width="1"/>
<rect x="898" y="688" width="32" height="18" rx="4" fill="#f9f9fa"/>
<text x="914" y="701" text-anchor="middle" style="font-size:10px;fill:#444">159%</text>
<path d="M945 697h8" stroke="#666" stroke-width="1.100"/>
<path d="M974 697h8M978 693v8" stroke="#666" stroke-width="1.100"/>
<rect class="i" x="1002" y="691" width="12" height="12" rx="2.500"/><path d="M1008 693.500l-1.500 1.500h3zM1008 700.500l-1.500-1.500h3z" fill="#444" stroke="#444" stroke-width=".5"/>

<!-- menu lower part -->
<rect x="823" y="300" width="199" height="207" rx="7" fill="#ebebed"/>
<!-- menu with purple border -->
<rect x="820" y="57" width="201" height="249" fill="#ebebed" stroke="#8646d6" stroke-width="6"/>

<rect x="829" y="63" width="56" height="47" rx="6" fill="#d9d9ee"/>
<g class="i">
 <path d="M852.500 73h7.500l1 1v11q0 1.200-1.200 1.200h-7.300q-1.200 0-1.200-1.200v-10.800q0-1.200 1.200-1.200z"/><path d="M854 73v2.500h4V73"/><circle cx="856" cy="81.500" r="1.700"/>
 <circle cx="915.500" cy="78" r="5"/><rect x="915.500" y="78" width="8.500" height="8.500" rx="2" fill="#ebebed"/><path d="M919.700 80.500v3.500M918 82.200h3.500"/>
 <path d="M977 78.500h-1.200q-1 0-1 1v6q0 1 1 1h10.400q1 0 1-1v-6q0-1-1-1H985M981 82V73M978 75.500l3-3 3 3"/>
</g>
<circle cx="861" cy="73.500" r="1.200" fill="#7a70e8"/>
<g style="font-size:9px;fill:#555" text-anchor="middle"><text x="857" y="103">保存</text><text x="918" y="103">副本</text><text x="981" y="103">共享</text></g>

<g class="i" style="stroke:#555">
 <path d="M836 126v-2.500q0-1 1-1h6l2.500 2.500v1.500M834 126.500h15q.8 0 .8 1v5.500q0 .9-.8.900h-15q-.8 0-.8-.9v-5.500q0-1 .8-1zM838 130l3.500 2 3.500-2"/>
 <path d="M837 152v-3.500q0-1 1-1h7.500q1 0 1 1v3.500M835 152h13.500q1.500 0 1.500 1.500v4q0 1.500-1.500 1.500H847M836.500 159H835q-1.500 0-1.500-1.500v-4q0-1.500 1.500-1.500M837 156h9.500v6.500h-9.500z"/>
</g>
<text class="m" x="854" y="133">另存为...</text>
<text class="sc" x="1009" y="132.500" text-anchor="end">Ctrl+Shift+S</text>
<text class="m" x="854" y="159">打印...</text>
<text class="sc" x="1009" y="158.500" text-anchor="end">Ctrl+P</text>
<path d="M835 170.500h174" stroke="#dcdcde" stroke-width="1"/>

<g class="i" style="stroke:#666;stroke-width:.9">
 <path d="M836 185v-2.500q0-1.500 1.500-1.500h8l2 2v2M836 190v1.500q0 1.500 1.500 1.500h9q1.500 0 1.500-1.500V190"/>
 <path d="M836 211.500V209q0-1.500 1.500-1.500h8l2 2v2M836 216.500v1.500q0 1.500 1.500 1.500h9q1.500 0 1.500-1.500v-1.500"/>
 <path d="M836 238v-2.500q0-1.500 1.500-1.500h8l2 2v2M836 243v1.500q0 1.500 1.500 1.500h9q1.500 0 1.500-1.500V243"/>
</g>
<text class="pd" x="842" y="189">PDF/A</text><text class="pd" x="842" y="215.500">PDF/E</text><text class="pd" x="842" y="242">PDF/X</text>
<text class="m" x="854" y="191">另存为 PDF/A...</text>
<text class="m" x="854" y="217.500">另存为 PDF/E...</text>
<text class="m" x="854" y="244">另存为 PDF/X...</text>
<g class="i" style="stroke:#555">
 <path d="M836 260h7l4 3.500v3M836 260q-1.500 0-1.500 1.500v10q0 1.500 1.500 1.500h3"/>
 <path d="M838 265l1.800-2 1.200 2M838 265h4"/><rect x="841" y="267.500" width="7" height="6" rx="1"/><path d="M842 272l2-2 1.500 1.500 1-1"/>
 <path d="M836 286.500h7l4 3.500v2M836 286.500q-1.500 0-1.500 1.500v10q0 1.500 1.500 1.500h3"/>
 <path d="M838 291.500l1.800-2 1.200 2M838 291.500h4"/><rect x="842" y="295" width="6" height="4.500" rx="1"/><path d="M843.500 295v-1.200a1.500 1.500 0 0 1 3 0v1.200"/>
</g>
<text class="m" x="854" y="270">图像型 PDF...</text>
<text class="m" x="854" y="297">删除密码</text>

<text class="h" x="832" y="327">UPDF 云盘</text>
<g class="i" style="stroke:#555">
 <path d="M838 356h-2.500a3.500 3.500 0 0 1-.5-7 4.800 4.800 0 0 1 9.300-1 3.800 3.800 0 0 1 1.200 8H844M841 359v-7M838.500 354l2.500-2.500 2.500 2.500"/>
 <path d="M847 372l-8.500 8.500c-1.600 1.600-1.200 3-.2 3.800s2.300.9 3.500-.3l7.200-7.200c2-2 1.700-4 .7-5s-3.300-1.300-5.200.6l-6.300 6.300"/>
 <path d="M836 429.500h6l2.500 2.500v3M836 429.500q-1.500 0-1.500 1.500v10.500q0 1.500 1.500 1.500h3M837 433h2v2"/><rect x="842" y="436" width="6.500" height="6.500" rx="1"/>
 <path d="M841 456.500h-2a4.500 4.500 0 0 0-4.500 4.500v1.500c0 3.500 3 5.800 6.500 6.500zM841 456.500h2.500a4.500 4.500 0 0 1 4.500 4.500"/><rect x="843" y="465" width="5.500" height="4.500" rx="1"/><path d="M844.300 465v-1a1.500 1.500 0 0 1 3 0v1"/>
 <path d="M841.500 481v6M839 484.500l2.500 2.500 2.500-2.500M836.500 487l-3 1.500 8 3.500 8-3.500-3-1.500M836.500 491.500l-3 1.500 8 3.500 8-3.500-3-1.500"/>
</g>
<text class="m" x="854" y="355">保存至 UPDF 云盘</text>
<text class="m" x="854" y="381">UPDF 分享</text>
<path d="M835 392.500h174" stroke="#dcdcde" stroke-width="1"/>
<text class="h" x="832" y="412">另存为其它</text>
<text class="m" x="854" y="440">减少文件大小(压缩 PDF)...</text>
<text class="m" x="854" y="466">使用密码进行保护...</text>
<text class="m" x="854" y="493">另存为压平副本...</text>

<!-- annotation arrow -->
<path d="M741 139L825 89M799 84.500L826 89L817 114.500" fill="none" stroke="#000" stroke-width="4.500" stroke-linecap="butt" stroke-linejoin="miter"/>
</svg>
</body>
</html>
